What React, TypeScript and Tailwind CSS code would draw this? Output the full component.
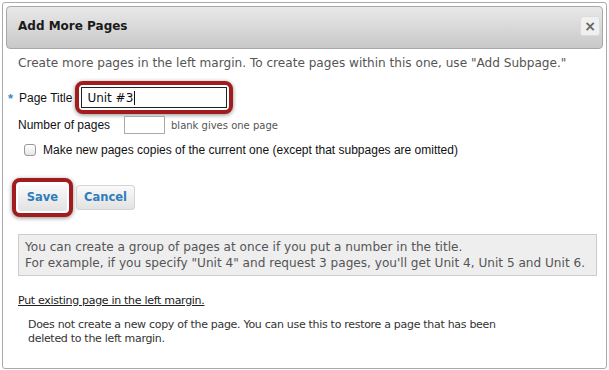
export default function App() {
  const verdana = { fontFamily: '"DejaVu Sans", Verdana, sans-serif' }
  const arial = { fontFamily: '"Liberation Sans", Arial, sans-serif' }

  return (
    <div className="w-[609px] h-[370px] bg-white px-[2px] pt-[2px] pb-[1px]">
      <div className="h-full border border-[#aaa] rounded-[3px] p-[3px] flex flex-col" style={verdana}>
        {/* header */}
        <div className="h-[43px] shrink-0 flex items-center justify-between rounded-[4px] border border-[#a8a8a8] bg-gradient-to-b from-[#e9e9e9] to-[#c8c8c8] pl-[11px] pr-[2px]">
          <span className="text-[12px] font-bold text-[#1a1a1a] -mt-[3px]">Add More Pages</span>
          <button className="w-[20px] h-[20px] -mt-[3px] rounded-[3px] border border-[#dcdcdc] bg-[#f0f0f0] flex items-center justify-center text-[#666] text-[14px] font-bold leading-none">
            ×
          </button>
        </div>

        <div className="pl-[12px] pr-[9px]">
          <p className="mt-[7px] text-[12.1px] text-[#555] leading-[14px]">
            Create more pages in the left margin. To create pages within this one, use "Add Subpage."
          </p>

          {/* form rows */}
          <div className="mt-[11px] flex items-center text-[12px] text-[#111]" style={arial}>
            <span className="text-[#3b8ac4] text-[13px] font-bold w-[11px] -ml-[10px] mt-[2px]">*</span>
            <span className="mr-[3px]">Page Title</span>
            <div className="rounded-[8px] border-[4px] border-[#a11d1d] shadow-[0_1px_4px_rgba(0,0,0,0.45)] p-[2px] bg-white">
              <div className="w-[146px] h-[21px] border border-[#222] flex items-center pl-[5px] text-[12px] text-[#111]" style={verdana}>
                Unit #3<span className="w-px h-[14px] bg-[#111] ml-[1px]" />
              </div>
            </div>
          </div>

          <div className="mt-[2px] flex items-center text-[12px] text-[#111]" style={arial}>
            <span className="w-[106px]">Number of pages</span>
            <div className="w-[41px] h-[18px] border border-[#aaa] bg-white" />
            <span className="ml-[6px] text-[10px] text-[#555]" style={verdana}>blank gives one page</span>
          </div>

          <label className="mt-[9px] ml-[6px] flex items-center gap-[7px] text-[12px] leading-[14px] text-[#111]" style={arial}>
            <span className="w-[12px] h-[12px] rounded-[3px] border border-[#999] bg-gradient-to-b from-white to-[#e6e6e6]" />
            Make new pages copies of the current one (except that subpages are omitted)
          </label>

          {/* buttons */}
          <div className="mt-[21px] flex items-center gap-[3px] -ml-[6px]">
            <div className="rounded-[8px] border-[4px] border-[#a11d1d] shadow-[0_1px_4px_rgba(0,0,0,0.45)] p-[2px] bg-white">
              <button className="h-[26px] w-[49px] rounded-[3px] bg-gradient-to-b from-[#fafafa] to-[#e2e2e2] text-[11.5px] font-bold text-[#2f7dbd]">
                Save
              </button>
            </div>
            <button className="h-[25px] w-[59px] rounded-[3px] border border-[#d4d4d4] bg-gradient-to-b from-[#fafafa] to-[#e2e2e2] text-[11.5px] font-bold text-[#2f7dbd]">
              Cancel
            </button>
          </div>

          {/* info box */}
          <div className="mt-[17px] -mr-[3px] border border-[#ccc] bg-[#eee] px-[6px] py-[4px] text-[12.1px] leading-[16px] text-[#555]">
            <p>You can create a group of pages at once if you put a number in the title.</p>
            <p>For example, if you specify "Unit 4" and request 3 pages, you'll get Unit 4, Unit 5 and Unit 6.</p>
          </div>

          <a className="mt-[18px] block text-[11px] tracking-[-0.3px] leading-[14px] text-[#222] underline">Put existing page in the left margin.</a>
          <p className="mt-[10px] ml-[10px] mr-[70px] text-[11px] tracking-[-0.3px] leading-[14px] text-[#333]">
            Does not create a new copy of the page. You can use this to restore a page that has been deleted to the left margin.
          </p>
        </div>
      </div>
    </div>
  )
}
